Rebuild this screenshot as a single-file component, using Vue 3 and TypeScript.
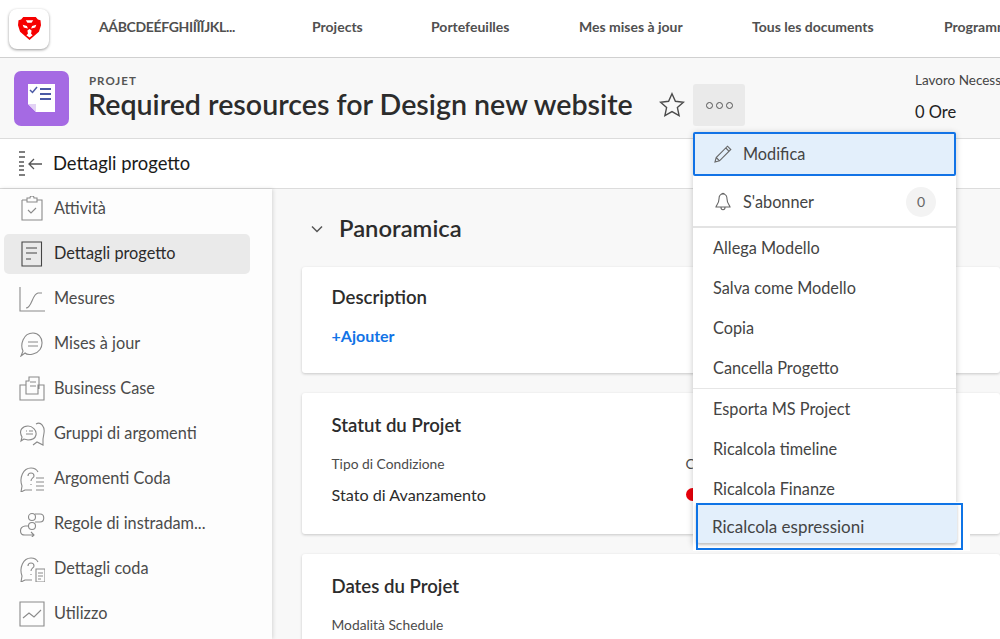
<template>
  <div class="page">
    <header class="topbar">
      <div class="logo-tile">
        <svg width="23" height="23" viewBox="0 0 22 22">
          <path fill="#f60000" d="M5 0h12l2 2.500 2.500.5.500 5-2 6-9 8-9-8-2-6 .5-5L3 2.500z" />
          <path fill="#fff" d="M4.500 7.500l4 1 1 2.500-4-1zM17.500 7.500l-4 1-1 2.500 4-1zM11 11.500l2 1.500-.5 3 1.500 1.500-3 2-3-2 1.500-1.500-.5-3z" />
          <path fill="#fff" d="M7.500 3h7L13 5.500H9z" />
        </svg>
      </div>
      <nav class="nav">
        <a v-for="item in navItems" :key="item.label" class="nav-link" :style="{ width: item.width + 'px' }">{{ item.label }}</a>
      </nav>
    </header>

    <section class="project-head">
      <div class="project-icon">
        <svg width="30" height="30" viewBox="0 0 30 30">
          <path fill="#fff" d="M1 1h27v28H9l-8-8z" />
          <path fill="#e3d2f5" d="M1 21h8v8z" />
          <path fill="none" stroke="#4b5aa5" stroke-width="1.500" d="M3 7l2.500 2.500L10 4" />
          <path fill="none" stroke="#4b5aa5" stroke-width="2" d="M13 6h11M13 11h11M13 16h11" />
        </svg>
      </div>
      <div class="project-titles">
        <span class="eyebrow">PROJET</span>
        <h1 class="title">Required resources for Design new website</h1>
      </div>
      <svg class="star" width="26" height="26" viewBox="0 0 26 26">
        <path fill="none" stroke="#4b4b4b" stroke-width="1.400" d="M13 1.800l3.400 7.500 8 .9-6 5.400 1.700 8L13 19.600l-7.100 4 1.700-8-6-5.400 8-.9z" />
      </svg>
      <button class="more-btn">
        <i></i><i></i><i></i>
      </button>
      <div class="head-stat">
        <span class="stat-label">Lavoro Necessario</span>
        <span class="stat-value">0 Ore</span>
      </div>
    </section>

    <div class="sub-head">
      <svg width="26" height="26" viewBox="0 0 26 26">
        <path fill="none" stroke="#555" stroke-width="1.300" d="M1 1h6M1 6h6M1 11h5M1 15h5M1 19h5M1 24h6" />
        <path fill="none" stroke="#555" stroke-width="1.300" d="M24 13H11M16 8l-5 5 5 5" />
      </svg>
      <span>Dettagli progetto</span>
    </div>

    <div class="body">
      <aside class="sidebar">
        <a v-for="item in sideItems" :key="item.label" class="side-item" :class="{ active: item.active }">
          <svg class="side-icon" width="26" height="26" viewBox="0 0 26 26" v-html="item.icon"></svg>
          <span>{{ item.label }}</span>
        </a>
      </aside>

      <main class="main">
        <div class="section-head">
          <svg width="14" height="14" viewBox="0 0 14 14">
            <path fill="none" stroke="#555" stroke-width="1.500" d="M2 4.500l5 5 5-5" />
          </svg>
          <h2>Panoramica</h2>
        </div>

        <div class="card card-desc">
          <h3>Description</h3>
          <a class="add-link">+Ajouter</a>
        </div>

        <div class="card card-status">
          <h3>Statut du Projet</h3>
          <div class="status-grid">
            <span class="field-label">Tipo di Condizione</span>
            <span class="field-label">Condizione</span>
            <span class="field-value">Stato di Avanzamento</span>
            <span class="dot"></span>
          </div>
        </div>

        <div class="card card-dates">
          <h3>Dates du Projet</h3>
          <span class="field-label">Modalità Schedule</span>
        </div>
      </main>
    </div>

    <div class="menu">
      <div class="menu-focus">
        <svg width="20" height="20" viewBox="0 0 20 20">
          <path fill="none" stroke="#666" stroke-width="1.100" d="M2 18l1.200-4.500L14.500 2.200l3.300 3.300L6.500 16.800zM3.200 13.500l3.300 3.300M12.800 4l3.300 3.300" />
        </svg>
        <span>Modifica</span>
      </div>
      <div class="menu-sub">
        <svg width="20" height="20" viewBox="0 0 20 20">
          <path fill="none" stroke="#666" stroke-width="1.100" d="M10 2c-3 0-4 2.500-4 5 0 4-2.500 6-3 8h14c-.5-2-3-4-3-8 0-2.500-1-5-4-5zM8.500 2.500C8.500 1 11.500 1 11.500 2.500M8 15.500c0 3 4 3 4 0" />
        </svg>
        <span>S'abonner</span>
        <b class="count">0</b>
      </div>
      <div class="menu-group">
        <a v-for="label in groupOne" :key="label" class="menu-item">{{ label }}</a>
      </div>
      <div class="menu-group second">
        <a v-for="label in groupTwo" :key="label" class="menu-item">{{ label }}</a>
      </div>
    </div>

    <div class="callout">
      <div class="callout-fill"></div>
      <div class="callout-box">
        <span>Ricalcola espressioni</span>
      </div>
    </div>
  </div>
</template>

<script setup lang="ts">
const navItems = [
  { label: 'AÁBCDEÉFGHIÍĨĬJKL...', width: 213 },
  { label: 'Projects', width: 119 },
  { label: 'Portefeuilles', width: 148 },
  { label: 'Mes mises à jour', width: 173 },
  { label: 'Tous les documents', width: 192 },
  { label: 'Programmes', width: 120 },
]

const sideItems = [
  {
    label: 'Attività',
    icon: '<path d="M3 4h5M18 4h5v20H3V4M8 4V2h3a2 2 0 0 1 4 0h3v4H8zM9 14l3 3 5-5"/>',
  },
  {
    label: 'Dettagli progetto',
    active: true,
    icon: '<path stroke="#444" d="M3 1h19.500v24H3zM7 7h11M7 12h11M7 18h5"/>',
  },
  {
    label: 'Mesures',
    icon: '<path d="M1 1v24h25M7 22c6 0 6-14 12-15h4"/>',
  },
  {
    label: 'Mises à jour',
    icon: '<path d="M2 25l2-5C1 14 4 2 14 2c11 0 13 18 0 21-4 1-7 0-8-1zM9 11h10M9 15h10"/>',
  },
  {
    label: 'Business Case',
    icon: '<path d="M1 9h6v9h12V9h6v15H1zM7 13V5h3V1h10v12M11 6h6M11 10h6"/>',
  },
  {
    label: 'Gruppi di argomenti',
    icon: '<path d="M5 18l-3 2 1-4C-1 9 4 5 9 5c4 0 9 4 8 9-1 4-5 5-8 5zM17 3c5-3 9 3 8 9l-1 6v6l-6-3-4 3M7 10h1M10 10h4M7 13h7"/>',
  },
  {
    label: 'Argomenti Coda',
    icon: '<path d="M13 24H6l-4 2 1-6C0 12 4 2 12 2c3 0 6 2 7 4M9 10c0-4 6-4 6 0 0 2-3 2-3 5M12 18v1M17 12h8M17 16h8M17 20h8M17 24h8"/>',
  },
  {
    label: 'Regole di instradam...',
    icon: '<circle cx="13" cy="6" r="3.500"/><circle cx="13" cy="15" r="3.500"/><path d="M16 3h5c5 0 5 8 0 8h-5M10 15H6c-6 1-6 9 0 9h9M12 21l3 3-3 3"/>',
  },
  {
    label: 'Dettagli coda',
    icon: '<path d="M13 24H6l-4 2 1-6C0 12 4 2 12 2c3 0 6 2 7 4M9 10c0-4 6-4 6 0 0 2-3 2-3 5M12 18v1M17 13h9v13h-9zM19 17h5M19 20h5M19 23h3"/>',
  },
  {
    label: 'Utilizzo',
    icon: '<path d="M1 1h24v24H1zM4 17l6-5 5 4 7-7"/>',
  },
]

const groupOne = ['Allega Modello', 'Salva come Modello', 'Copia', 'Cancella Progetto']
const groupTwo = ['Esporta MS Project', 'Ricalcola timeline', 'Ricalcola Finanze']
</script>

<style>
html,
body {
  margin: 0;
  height: 100%;
  overflow: hidden;
}
</style>

<style scoped>
.page {
  position: relative;
  width: 1000px;
  height: 639px;
  overflow: hidden;
  display: flex;
  flex-direction: column;
  background: #f8f8f8;
  font-family: Lato, "Open Sans", sans-serif;
  color: #2c2c2c;
}

.topbar {
  display: flex;
  align-items: center;
  flex: 0 0 57px;
  padding-left: 9px;
  background: #fff;
  border-bottom: 1px solid #d0d0d0;
  overflow: hidden;
}

.logo-tile {
  display: flex;
  align-items: center;
  justify-content: center;
  flex: 0 0 40px;
  height: 40px;
  border-radius: 8px;
  background: #fff;
  box-shadow: 0 1px 3px rgba(0, 0, 0, 0.4);
}

.nav {
  display: flex;
  margin-left: 50px;
  margin-top: -5px;
}

.nav-link {
  flex: none;
  font-size: 14px;
  font-weight: 700;
  color: #505050;
  white-space: nowrap;
}

.nav-link:first-child {
  letter-spacing: -0.350px;
}

.project-head {
  display: flex;
  align-items: center;
  flex: 0 0 80px;
  padding-left: 14px;
  border-bottom: 1px solid #dcdcdc;
}

.project-icon {
  display: flex;
  align-items: center;
  justify-content: center;
  flex: 0 0 55px;
  height: 55px;
  border-radius: 7px;
  background: #a56ae3;
}

.project-titles {
  display: flex;
  flex-direction: column;
  flex: none;
  margin-left: 19px;
  margin-top: -2px;
  width: 571px;
}

.eyebrow {
  margin-left: 1px;
  font-size: 11.500px;
  font-weight: 700;
  letter-spacing: 1px;
  color: #555;
}

.title {
  margin: 0;
  font-size: 28.600px;
  font-weight: 600;
  line-height: 34px;
  white-space: nowrap;
}

.star {
  flex: none;
  margin-top: 14px;
}

.more-btn {
  display: flex;
  align-items: center;
  justify-content: center;
  gap: 3px;
  flex: 0 0 52px;
  height: 42px;
  margin-left: 8px;
  margin-top: 14px;
  padding: 0;
  border: 0;
  border-radius: 3px;
  background: #eaeaea;
}

.more-btn i {
  width: 5px;
  height: 5px;
  border: 1px solid #555;
  border-radius: 50%;
}

.head-stat {
  display: flex;
  flex-direction: column;
  flex: none;
  gap: 14px;
  margin-left: 170px;
  margin-top: -2px;
  white-space: nowrap;
}

.stat-label {
  font-size: 13.500px;
  color: #444;
}

.stat-value {
  font-size: 16.500px;
  color: #222;
}

.sub-head {
  display: flex;
  align-items: center;
  gap: 9px;
  flex: 0 0 49px;
  padding-left: 18px;
  background: #fff;
  border-bottom: 1px solid #dcdcdc;
  font-size: 18.400px;
  color: #1a1a1a;
}

.sub-head span {
  margin-top: -1px;
}

.body {
  display: flex;
  flex: 1;
  min-height: 0;
}

.sidebar {
  display: flex;
  flex-direction: column;
  flex: 0 0 272px;
  padding: 0 22px 0 4px;
  box-sizing: border-box;
  background: #fdfdfd;
  box-shadow: 1px 0 4px rgba(0, 0, 0, 0.14);
}

.side-item {
  display: flex;
  align-items: center;
  gap: 9px;
  flex: 0 0 40px;
  margin-bottom: 5px;
  padding-left: 15px;
  border-radius: 5px;
  font-size: 16.300px;
  color: #4b4b4b;
  white-space: nowrap;
}

.side-item span {
  margin-top: -3px;
}

.side-item.active {
  background: #eaeaea;
  color: #2c2c2c;
}

.side-icon {
  flex: none;
  fill: none;
  stroke: #8a8a8a;
  stroke-width: 1.100;
}

.main {
  flex: 1;
  padding: 20px 0 0 30px;
  min-width: 0;
}

.section-head {
  display: flex;
  align-items: center;
  gap: 15px;
  height: 40px;
  margin-bottom: 18px;
  padding-left: 8px;
}

.section-head h2 {
  margin: -2px 0 0;
  font-size: 23.800px;
  font-weight: 600;
  color: #2c2c2c;
}

.card {
  display: flex;
  flex-direction: column;
  padding: 17px 30px 18px 29.500px;
  background: #fff;
  border-radius: 3px;
  box-shadow: 0 1px 3px rgba(0, 0, 0, 0.2);
}

.card h3 {
  margin: 0;
  font-size: 18.600px;
  font-weight: 600;
  line-height: 26px;
  color: #2c2c2c;
}

.card-desc {
  height: 106px;
  box-sizing: border-box;
  margin-bottom: 20px;
}

.add-link {
  margin-top: 16px;
  font-size: 16px;
  font-weight: 700;
  color: #1273e6;
}

.card-status {
  height: 141px;
  box-sizing: border-box;
  margin-bottom: 20px;
  padding-top: 19px;
}

.status-grid {
  display: grid;
  grid-template-columns: 354px 1fr;
  align-items: center;
  row-gap: 13px;
  margin-top: 17px;
}

.field-label {
  font-size: 13.800px;
  color: #4b4b4b;
}

.field-value {
  font-size: 16.200px;
  color: #2c2c2c;
}

.dot {
  width: 13px;
  height: 13px;
  border-radius: 50%;
  background: #e8000b;
}

.card-dates {
  flex: 1;
  padding-top: 19px;
}

.card-dates .field-label {
  margin-top: 17px;
}

.menu {
  position: absolute;
  left: 693px;
  top: 132px;
  width: 263px;
  height: 413px;
  background: #fff;
  border-radius: 3px;
  box-shadow: 0 1px 6px rgba(0, 0, 0, 0.22);
  font-size: 16.300px;
  color: #444;
}

.menu-focus {
  display: flex;
  align-items: center;
  gap: 10px;
  height: 44px;
  box-sizing: border-box;
  padding-left: 18px;
  border: 2px solid #1273e6;
  border-radius: 2px;
  background: #e3effb;
}

.menu-focus span {
  margin-top: -2px;
}

.menu-sub {
  display: flex;
  align-items: center;
  gap: 10px;
  height: 52px;
  box-sizing: border-box;
  padding: 1px 20px 0 20px;
  border-bottom: 2px solid #e3e3e3;
}

.count {
  display: flex;
  align-items: center;
  justify-content: center;
  width: 30px;
  height: 30px;
  margin-left: auto;
  border-radius: 50%;
  background: #f3f3f3;
  font-size: 14px;
  font-weight: 400;
  color: #666;
}

.menu-group {
  display: flex;
  flex-direction: column;
}

.menu-group.second {
  border-top: 1px solid #e6e6e6;
}

.menu-item {
  display: flex;
  align-items: center;
  height: 40px;
  box-sizing: border-box;
  padding: 0 0 2px 20px;
}

.callout {
  position: absolute;
  left: 693px;
  top: 502px;
  width: 277px;
  height: 49px;
  background: #fff;
}

.callout-fill {
  position: absolute;
  left: 3px;
  top: 1px;
  width: 261px;
  height: 40px;
  border-radius: 0 0 4px 4px;
  background: #e3effb;
  box-shadow: 0 2px 3px rgba(0, 0, 0, 0.25);
}

.callout-box {
  position: absolute;
  left: 3px;
  top: 1px;
  display: flex;
  align-items: center;
  width: 267px;
  height: 47px;
  box-sizing: border-box;
  padding: 0 0 1px 14px;
  border: 2px solid #0f74e6;
  font-size: 17px;
  color: #444;
}
</style>
